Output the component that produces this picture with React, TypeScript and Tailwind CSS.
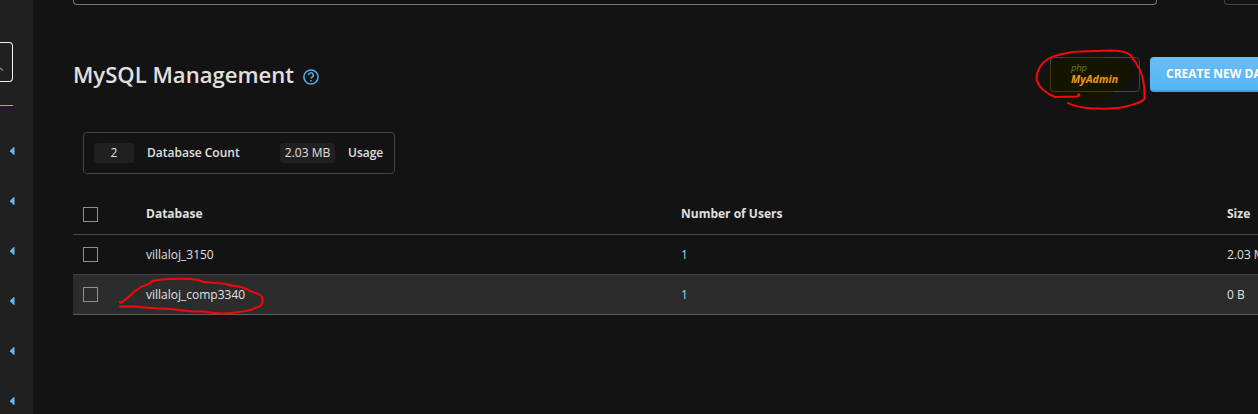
const databases = [
  { name: 'villaloj_3150', users: 1, size: '2.03 MB' },
  { name: 'villaloj_comp3340', users: 1, size: '0 B' },
];

function Sidebar() {
  return (
    <aside className="flex h-full w-[33px] shrink-0 flex-col overflow-hidden bg-[#202020]">
      <div className="mt-[42px] flex h-10 w-[13px] shrink-0 items-end rounded-r-[4px] border border-l-0 border-[#f2f2f2]">
        <svg className="mb-[9px] block" width="4" height="5" viewBox="0 0 4 5">
          <path d="M0 1 L3 3.500" stroke="#8c8c8c" strokeWidth="1.2" fill="none" />
        </svg>
      </div>
      <div className="mt-[23px] h-px w-[13px] shrink-0 bg-[#62b8f3]" />
      <nav className="mt-5 flex shrink-0 flex-col">
        {[0, 1, 2, 3, 4, 5].map((item) => (
          <div key={item} className="flex h-[50px] shrink-0 items-center pl-[10px]">
            <svg width="5" height="8" viewBox="0 0 5 8">
              <path d="M4.500 0 V8 L3.500 7.700 L0 4.300 V3.700 L3.500 0.300 Z" fill="#62bbf6" />
            </svg>
          </div>
        ))}
      </nav>
    </aside>
  );
}

function Checkbox() {
  return <span className="block h-[15px] w-[15px] border border-[#8a8f9c]" />;
}

function PhpMyAdminButton() {
  return (
    <div className="relative h-[35px] w-[90px]">
      <button className="relative flex h-[35px] w-[90px] flex-col items-start justify-start rounded-[4px] border border-[#444444] pl-5 pt-[7px] italic">
        <svg className="absolute -left-[17px] -top-[9px]" width="112" height="62" viewBox="1034 49 112 62">
          <path
            d="M1047 72 Q1051 61 1070 58 L1096 57 L1126 61 Q1134 65 1134 74 L1132 82 Q1124 89 1113 91 Q1108 99 1098 101 L1074 102 Q1058 101 1048 94 L1046 82 Z"
            fill="#141400"
          />
          <path
            d="M1050.500 65 V88 Q1050.500 91.500 1054 91.500 H1112 M1063 57.500 H1105"
            fill="none"
            stroke="#3d3d0d"
            strokeWidth="1"
          />
        </svg>
        <span className="relative mt-[-1px] h-[10px] font-['DejaVu_Sans',sans-serif] text-[8.5px] leading-[9px] tracking-[-0.1px] text-[#737f09]">php</span>
        <span className="relative font-['Open_Sans',sans-serif] text-[10.5px] font-bold leading-[11px] tracking-[0.1px] text-[#f39a09]">MyAdmin</span>
      </button>
      <svg className="absolute -left-4 -top-[8px]" width="112" height="62" viewBox="1034 49 112 62">
        <path
          d="M1078.500 94 Q1081 96 1076 96.500 L1055 97 C1047 94 1038 87 1036.500 79 C1036.500 73 1039 65 1048 59 C1057 54 1063 54 1068 53 Q1072 51.500 1080 51.500 L1112 50.500 C1125 51 1130 53 1133 59 Q1136 62 1137 65 C1143 73 1145 83 1144.500 99 C1140 104 1133 104 1124 107 C1111 109.500 1102 108.500 1092 108.500 Q1075 107 1068 103"
          fill="none"
          stroke="#f80808"
          strokeWidth="2"
          strokeLinecap="round"
        />
      </svg>
    </div>
  );
}

function Row({ name, users, size, highlighted }: { name: string; users: number; size: string; highlighted: boolean }) {
  return (
    <div
      className={
        highlighted
          ? 'relative flex h-10 items-center border-b border-[#5c5c5c] bg-[#2c2c2c] pl-[10px]'
          : 'flex h-10 items-center border-b border-[#444444] pl-[10px]'
      }
    >
      <div className="w-[63px]"><Checkbox /></div>
      <div className="w-[535px]">{name}</div>
      <div className="w-[546px] text-[#9fd6f8]">{users}</div>
      <div>{size}</div>
      {highlighted && (
        <svg className="absolute left-[44px] top-[1px]" width="150" height="40" viewBox="117 276 150 40">
          <path
            d="M120 302 L120.500 303 C127 299 131 295 135 291 L142 286.500 Q146 286 150 283 Q153 280 158 280 C173 278.500 187 278 198 280 Q203 282.500 210 282.500 Q219 283 226 284 Q231 286 238 286.500 Q246 288 251 291.500 Q262 294 262.500 299 Q264 306 255 308 Q251 311 238 312 Q225 315 203 311.500 Q192 312 172 309 Q145 308 135 306.500 L120 306.500"
            fill="none"
            stroke="#f50808"
            strokeWidth="2"
            strokeLinecap="round"
            strokeLinejoin="round"
          />
        </svg>
      )}
    </div>
  );
}

export default function App() {
  return (
    <div className="flex h-[414px] w-[1258px] overflow-hidden bg-[#131313] font-['Open_Sans',sans-serif] text-[12px] leading-[18px] text-[#e0e0e0]">
      <Sidebar />
      <main className="w-[1225px] overflow-hidden pl-10">
        <div className="flex h-[5px] w-[1400px] gap-[67px]">
          <div className="w-[1084px] rounded-b-[4px] border border-t-0 border-[#747474]" />
          <div className="w-[200px] rounded-b-[4px] border border-t-0 border-[#444444]" />
        </div>

        <header className="mt-[52px] flex h-[35px] w-[1300px] items-center justify-between">
          <div className="flex items-center">
            <h1 className="w-[230px] text-[22.1px] font-semibold leading-[35px]">MySQL Management</h1>
            <svg className="mt-1" width="16" height="16" viewBox="0 0 16 16" fill="none" stroke="#55b0ec" strokeWidth="1.5">
              <circle cx="8" cy="8" r="7.1" />
              <path d="M5.700 6.300 A2.300 2.300 0 1 1 9 8.200 Q8 8.700 8 9.600" />
              <path d="M8 10.900 V12.400" />
            </svg>
          </div>
          <div className="flex shrink-0 gap-[10px]">
            <PhpMyAdminButton />
            <button className="h-[35px] w-[223px] rounded-[4px] border-b-2 border-[#2fa5ef] bg-linear-to-b from-[#6abdf5] to-[#55b6f6] pl-4 pt-px text-left text-[12px] font-bold leading-[32px] text-white">
              CREATE NEW DATABASE
            </button>
          </div>
        </header>

        <section className="ml-[10px] mt-10 flex h-[42px] w-[312px] items-center rounded-[4px] border border-[#444444] pl-[10px] font-semibold">
          <span className="h-5 w-10 rounded-[4px] bg-[#202020] text-center font-normal leading-5">2</span>
          <span className="ml-[13px] w-[133px]">Database Count</span>
          <span className="h-5 w-[55px] rounded-[4px] bg-[#202020] text-center font-normal leading-5">2.03 MB</span>
          <span className="ml-[13px]">Usage</span>
        </section>

        <section className="mt-5 w-[1300px]">
          <div className="flex h-[41px] items-center border-b border-[#444444] pl-[10px] font-bold">
            <div className="w-[63px]"><Checkbox /></div>
            <div className="w-[535px]">Database</div>
            <div className="w-[546px]">Number of Users</div>
            <div>Size</div>
          </div>
          {databases.map((database, index) => (
            <Row key={database.name} {...database} highlighted={index === 1} />
          ))}
        </section>
      </main>
    </div>
  );
}
